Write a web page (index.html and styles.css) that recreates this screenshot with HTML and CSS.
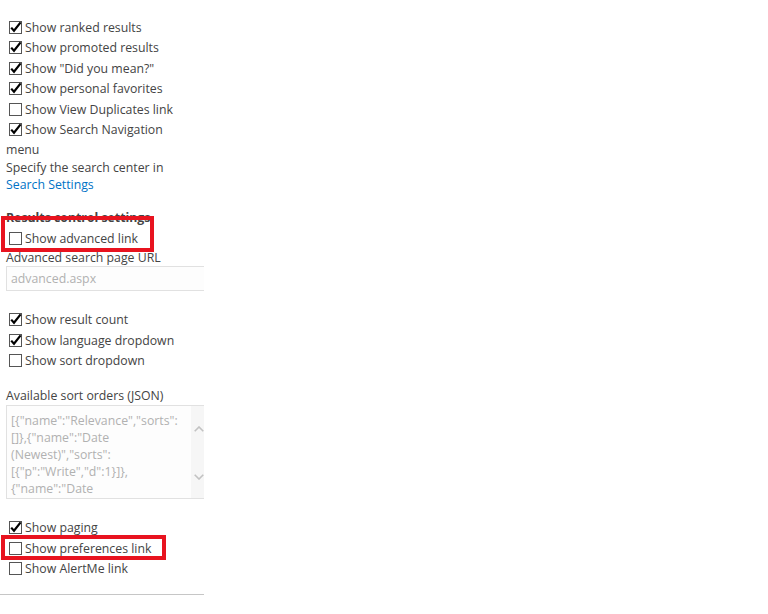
FILE: index.html
```html
<!DOCTYPE html>
<html lang="en">
<head>
    <meta charset="UTF-8">
    <meta name="viewport" content="width=device-width, initial-scale=1.0">
    <title>Search Box settings</title>
    <link rel="stylesheet" href="styles.css">
</head>
<body>
    <div class="panel">
        <div class="check"><span class="box on"><svg viewBox="0 0 13 13"><path d="M2.2 6.6 L5 9.8 L11.6 1.4"/></svg></span>Show ranked results</div>
        <div class="check"><span class="box on"><svg viewBox="0 0 13 13"><path d="M2.2 6.6 L5 9.8 L11.6 1.4"/></svg></span>Show promoted results</div>
        <div class="check"><span class="box on"><svg viewBox="0 0 13 13"><path d="M2.2 6.6 L5 9.8 L11.6 1.4"/></svg></span>Show "Did you mean?"</div>
        <div class="check"><span class="box on"><svg viewBox="0 0 13 13"><path d="M2.2 6.6 L5 9.8 L11.6 1.4"/></svg></span>Show personal favorites</div>
        <div class="check"><span class="box"></span>Show View Duplicates link</div>
        <div class="check"><span class="box on"><svg viewBox="0 0 13 13"><path d="M2.2 6.6 L5 9.8 L11.6 1.4"/></svg></span>Show Search Navigation menu</div>
        <div class="note">Specify the search center in <a href="#">Search Settings</a></div>

        <div class="section">Results control settings</div>
        <div class="check"><span class="box"></span>Show advanced link</div>
        <div class="field-label">Advanced search page URL</div>
        <div class="input">advanced.aspx</div>

        <div class="group">
            <div class="check"><span class="box on"><svg viewBox="0 0 13 13"><path d="M2.2 6.6 L5 9.8 L11.6 1.4"/></svg></span>Show result count</div>
            <div class="check"><span class="box on"><svg viewBox="0 0 13 13"><path d="M2.2 6.6 L5 9.8 L11.6 1.4"/></svg></span>Show language dropdown</div>
            <div class="check"><span class="box"></span>Show sort dropdown</div>
        </div>

        <div class="field-label sort-label">Available sort orders (JSON)</div>
        <div class="textbox">
            <div class="textbox-text">
                <div>[{"name":"Relevance","sorts":</div>
                <div>[]},{"name":"Date</div>
                <div>(Newest)","sorts":</div>
                <div>[{"p":"Write","d":1}]},</div>
                <div>{"name":"Date</div>
            </div>
            <div class="scrollbar">
                <svg class="arrow up" viewBox="0 0 10 6"><path d="M0.7 5.3 L5 1 L9.3 5.3"/></svg>
                <svg class="arrow down" viewBox="0 0 10 6"><path d="M0.7 0.7 L5 5 L9.3 0.7"/></svg>
            </div>
        </div>

        <div class="group paging">
            <div class="check"><span class="box on"><svg viewBox="0 0 13 13"><path d="M2.2 6.6 L5 9.8 L11.6 1.4"/></svg></span>Show paging</div>
            <div class="check"><span class="box"></span>Show preferences link</div>
            <div class="check"><span class="box"></span>Show AlertMe link</div>
        </div>

        <div class="rule"></div>
    </div>

    <div class="mark mark-advanced"></div>
    <div class="mark mark-preferences"></div>
</body>
</html>
```

FILE: styles.css
```css
body {
    margin: 0;
    padding: 0;
    background-color: #ffffff;
    font-family: 'Open Sans', 'Noto Sans', sans-serif;
    font-size: 12.3px;
    color: #444444;
}

.panel {
    width: 184px;
    padding: 18px 14px 0 6px;
    overflow: hidden;
    height: 600px;
    box-sizing: content-box;
}

.check {
    line-height: 20.4px;
}

.box {
    position: relative;
    display: inline-block;
    width: 11px;
    height: 11px;
    border: 1px solid #555555;
    background-color: #ffffff;
    margin: 0 3px 0 3px;
    vertical-align: -2px;
}

.box svg {
    position: absolute;
    left: -1px;
    top: -1px;
    width: 13px;
    height: 13px;
    overflow: visible;
}

.box svg path {
    fill: none;
    stroke: #000000;
    stroke-width: 2.2;
}

.note {
    line-height: 17px;
    margin-top: -2px;
}

.note a {
    color: #0072c6;
    text-decoration: none;
}

.section {
    font-weight: 700;
    line-height: 17px;
    margin-top: 16px;
    margin-bottom: 3px;
}

.field-label {
    line-height: 17px;
}

.input {
    width: 210px;
    height: 23px;
    border: 1px solid #e1e1e1;
    background-color: #fdfdfd;
    color: #b1b1b1;
    line-height: 23px;
    padding-left: 4px;
}

.group {
    margin-top: 19px;
}

.sort-label {
    margin-top: 16px;
}

.textbox {
    display: flex;
    width: 210px;
    height: 92px;
    margin-top: 1px;
    border: 1px solid #e1e1e1;
    background-color: #fdfdfd;
    color: #b1b1b1;
}

.textbox-text {
    width: 180px;
    padding: 6px 0 0 4px;
    line-height: 17px;
    white-space: nowrap;
    overflow: hidden;
}

.scrollbar {
    position: relative;
    width: 17px;
    background-color: #f6f6f6;
}

.arrow {
    position: absolute;
    left: 3px;
    width: 10px;
    height: 6px;
}

.arrow path {
    fill: none;
    stroke: #c2c2c2;
    stroke-width: 1.6;
}

.arrow.up {
    top: 20px;
}

.arrow.down {
    top: 68px;
}

.paging {
    margin-top: 19px;
}

.rule {
    margin: 14px 0 0 -6px;
    width: 210px;
    height: 1px;
    background-color: #c6c6c6;
}

.mark {
    position: absolute;
    border: 4px solid #e8131f;
    box-sizing: border-box;
}

.mark-advanced {
    left: 1px;
    top: 216px;
    width: 153px;
    height: 36px;
}

.mark-preferences {
    left: 1px;
    top: 535px;
    width: 165px;
    height: 25px;
}
```
